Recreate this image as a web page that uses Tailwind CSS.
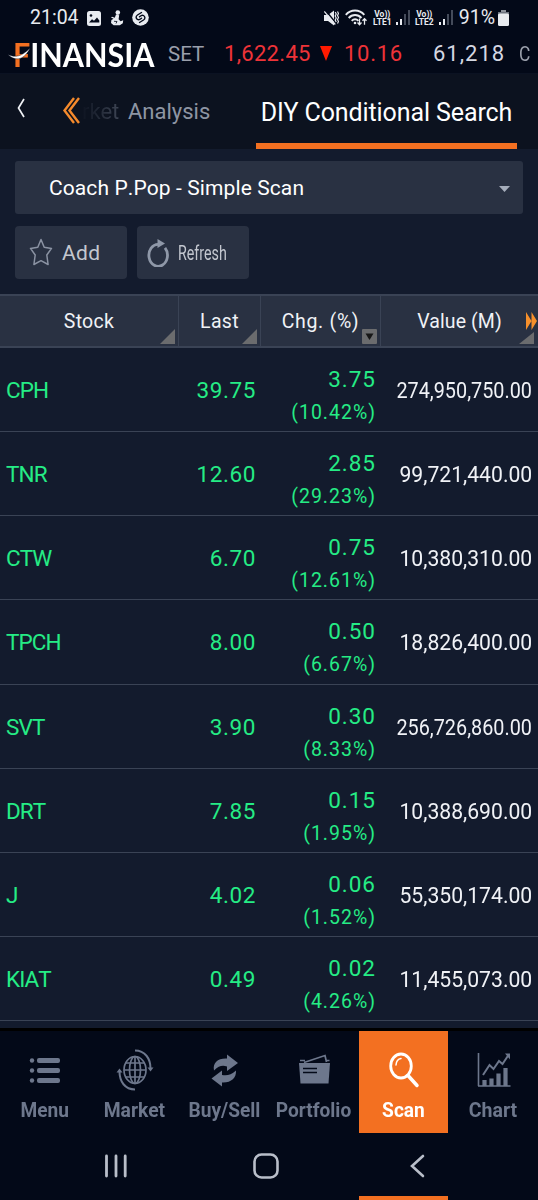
<!DOCTYPE html>
<html lang="en">
<head>
  <meta charset="UTF-8">
  <meta name="viewport" content="width=device-width, initial-scale=1.0">
  <title>Finansia - DIY Conditional Search</title>
  <script src="https://cdn.jsdelivr.net/npm/@tailwindcss/browser@4"></script>
</head>
<body class="bg-[#030918] overflow-hidden">
<div class="w-[538px] h-[1200px] flex flex-col overflow-hidden bg-[#030918] font-[Roboto,sans-serif] text-[#f0f2f6] whitespace-nowrap">

  <!-- Status bar -->
  <div class="h-[35px] shrink-0 flex items-center pl-[30px] pr-[29px] text-[19.5px] leading-none text-[#e8ebf0]">
    <span class="w-[57px]">21:04</span>
    <svg class="w-[14px] h-[15px] mt-px" viewBox="0 0 14 15">
      <rect width="14" height="15" rx="2.5" fill="#e8ebf0"/>
      <path d="M2 11.5l3-3.2 2 1.4 3-3.2 2.3 3v2z" fill="#030918"/>
      <circle cx="4" cy="4.5" r="1.3" fill="#030918"/>
    </svg>
    <svg class="w-[14px] h-[16px] ml-[9px]" viewBox="0 0 14 16" fill="#e8ebf0">
      <circle cx="7.8" cy="2.6" r="2.3"/>
      <path d="M6 4.5l3.2.7-.6 4 2 2 2.6-1-.4 3-3 2H3.6L1 13l.4-3 2.2-1.2L1 7.5 2 6.8l2.8 1z"/>
      <path d="M4 11.3l3 .2-1 2" fill="none" stroke="#030918" stroke-width=".8"/>
    </svg>
    <svg class="w-[17px] h-[17px] ml-[8px]" viewBox="0 0 17 17">
      <circle cx="8.5" cy="8.5" r="8.3" fill="#e8ebf0"/>
      <path d="M9.500 3.500L5.500 6c-2.200 1.500-1.500 3.500 0 4.500 1.500.8 2.500 0 4-1.200M7.500 13.500l4-2.500c2.200-1.500 1.500-3.500 0-4.500-1.500-.8-2.500 0-4 1.200" fill="none" stroke="#030918" stroke-width="1.400" stroke-linecap="round"/>
    </svg>
    <div class="flex-1"></div>
    <svg class="w-[15px] h-[16px]" viewBox="0 0 15 16">
      <path d="M0 5h4l6-4.500v15L4 11H0z" fill="#e8ebf0"/>
      <path d="M1.500.3l11 13.500" stroke="#030918" stroke-width="1.500"/>
      <path d="M.3 1.500l11 13M11.200 2l1 2-1 2 1 2-1 2 1 2M13.500 1.500l1 2-1 2 1 2-1 2 1 2-1 2" stroke="#e8ebf0" stroke-width="1.200" fill="none"/>
    </svg>
    <svg class="w-[23px] h-[17px] ml-[6px]" viewBox="0 0 23 17" fill="none" stroke="#e8ebf0" stroke-width="1.900">
      <path d="M.8 5.800c5-5.700 13.500-5.700 18.500 0M3.700 9c3.500-4 9.200-4 12.700 0M6.700 11.800c2-2 4.800-2 6.700 0"/>
      <circle cx="10" cy="14" r="1.300" fill="#e8ebf0" stroke="none"/>
      <path d="M14.500 9.500v6M12.500 13.500l2 2.200 2-2.200M19.500 15.800v-6M17.500 11.800l2-2.200 2 2.200" stroke-width="1.300"/>
    </svg>
    <div class="flex flex-col items-center w-[21px] ml-[4px] text-[8.500px] leading-[8px] font-bold"><span>Vo))</span><span>LTE1</span></div>
    <svg class="w-[14px] h-[15px] ml-[3px]" viewBox="0 0 14 15">
      <path d="M1 12v3M5 9v6" stroke="#e8ebf0" stroke-width="2"/>
      <path d="M9 4v11M13 0v15" stroke="#5b6170" stroke-width="1.500"/>
    </svg>
    <div class="flex flex-col items-center w-[21px] ml-[4px] text-[8.500px] leading-[8px] font-bold"><span>Vo))</span><span>LTE2</span></div>
    <svg class="w-[14px] h-[15px] ml-[4px]" viewBox="0 0 14 15">
      <path d="M1 12v3M5 9v6" stroke="#e8ebf0" stroke-width="2"/>
      <path d="M9 4v11M13 0v15" stroke="#5b6170" stroke-width="1.500"/>
    </svg>
    <span class="ml-[6px]">91%</span>
    <svg class="w-[11px] h-[16px] ml-[3px]" viewBox="0 0 11 16">
      <path d="M3 0h5v2H3z" fill="#8d929c"/><path d="M0 2h11v4H0z" fill="#6c727e"/>
      <rect y="3.500" width="11" height="12.500" rx="1.500" fill="#e8ebf0"/>
    </svg>
  </div>

  <!-- Logo and index ticker -->
  <div class="h-[39px] shrink-0 flex items-center border-b border-[#0b1222] text-[22px] leading-none">
    <div class="relative w-[168px] pl-[13px] font-[Lato,sans-serif] font-bold text-[33px] leading-[37px] text-white">
      <div class="origin-left scale-x-[.925]"><span class="text-[#f37021]">F</span>INANSIA</div>
      <svg class="absolute left-[8px] top-[12px] w-[22px] h-[13px]" viewBox="0 0 22 13">
        <path d="M0 6.500c7 3.500 14 2 22-6.500-5 11-14 14.500-22 6.500z" fill="#fff" stroke="#030918" stroke-width=".4"/>
      </svg>
    </div>
    <span class="w-[56px] text-[20.500px] text-[#9a9fab]">SET</span>
    <span class="w-[96px] tracking-[.3px] text-[#ee3338]">1,622.45</span>
    <svg class="w-[12px] h-[15px] mb-[2px]" viewBox="0 0 12 15"><path d="M0 0h12L6 15z" fill="#ff1a00"/></svg>
    <span class="ml-[12px] w-[89px] tracking-[.7px] text-[#ee3338]">10.16</span>
    <span class="w-[86px] tracking-[1px] text-[#d5d8e2]">61,218</span>
    <span class="text-[20.500px] scale-x-[.85] origin-left text-[#9a9fab]">C</span>
  </div>

  <!-- Tabs -->
  <div class="h-[75px] shrink-0 flex bg-[#0c121f]">
    <svg class="w-[8px] h-[20px] ml-[17px] mt-[24px]" viewBox="0 0 8 20" fill="none" stroke="#f0f2f6" stroke-width="1.700"><path d="M7 1L1.500 10 7 19"/></svg>
    <svg class="w-[18px] h-[27px] ml-[37px] mt-[23px]" viewBox="0 0 18 27" fill="none" stroke="#f58a2c" stroke-width="2.400"><path d="M12 1L2.500 13.500 12 26M17 1L7.500 13.500 17 26"/></svg>
    <div class="w-[176px] pt-[24px] text-[22px] leading-[28px] text-[#8e95a3]">
      <span class="inline-block w-[48px] pl-[2px] bg-linear-to-r from-[#0c121f] to-[#4a5160] bg-clip-text text-transparent">rket</span><span>Analysis</span>
    </div>
    <div class="w-[261px] pt-[24px] border-b-[6px] border-[#f37021] text-center text-[25px] leading-[29px] tracking-[-.1px] text-white">DIY Conditional Search</div>
  </div>

  <!-- Filters -->
  <div class="h-[145px] shrink-0 bg-[#131b2d] pt-[12px] pl-[15px]">
    <div class="w-[508px] h-[53px] rounded-[3px] bg-[#293142] flex items-center justify-between pt-[2px] pl-[34px] pr-[13px] text-[21px] tracking-[.1px] [font-kerning:none] text-white">
      <span>Coach P.Pop - Simple Scan</span>
      <svg class="w-[11px] h-[6px]" viewBox="0 0 11 6"><path d="M0 0h11L5.500 6z" fill="#a5adbb"/></svg>
    </div>
    <div class="flex gap-[10px] mt-[12px] text-[21px] text-[#c3c7cf]">
      <div class="w-[112px] h-[53px] rounded bg-[#293142] flex items-center pt-[2px] pl-[14px]">
        <svg class="w-[24px] h-[28px] mb-[4px]" viewBox="0 0 24 28" fill="none" stroke="#8b93a3" stroke-width="1.500" stroke-linejoin="round"><path d="M12 1.500l3.200 7.700 7.300 1.200-4.700 6.600 1.300 9.500-7.100-3.800-7.100 3.800 1.300-9.500-4.700-6.600 7.300-1.200z"/></svg>
        <span class="ml-[9px] tracking-[.3px]">Add</span>
      </div>
      <div class="w-[112px] h-[53px] rounded bg-[#293142] flex items-center pt-[2px] pl-[10px]">
        <svg class="w-[22px] h-[28px] mb-[2px]" viewBox="0 0 22 28"><path d="M11.500 5.300A9.300 11 0 1 0 18 8.800" fill="none" stroke="#8f98a8" stroke-width="2.800"/><path d="M10.500 0l7.500 4.500-7.500 4.500z" fill="#8f98a8"/></svg>
        <span class="ml-[9px] w-[50px]"><span class="inline-block origin-left scale-x-[.68]">Refresh</span></span>
      </div>
    </div>
  </div>

  <!-- Table head -->
  <div class="h-[54px] shrink-0 grid grid-cols-[179px_82px_120px_157px] bg-[#293142] border-y-2 border-[#3a4355] text-[19.500px] leading-[51px] tracking-[.3px] text-center">
    <div class="relative border-r border-[#3a4355]">Stock
      <svg class="absolute right-[3px] bottom-[3px] w-[15px] h-[15px]" viewBox="0 0 15 15"><path d="M15 0v15H0z" fill="#6b6c6e"/></svg>
    </div>
    <div class="relative border-r border-[#3a4355]">Last
      <svg class="absolute right-[3px] bottom-[3px] w-[15px] h-[15px]" viewBox="0 0 15 15"><path d="M15 0v15H0z" fill="#6b6c6e"/></svg>
    </div>
    <div class="relative border-r border-[#3a4355] tracking-[.7px]">Chg. (%)
      <svg class="absolute right-[3px] bottom-[3px] w-[15px] h-[15px]" viewBox="0 0 15 15"><rect width="15" height="15" rx="1" fill="#6b6c6e"/><path d="M3.500 4.500h8l-4 6.500z" fill="#171717"/></svg>
    </div>
    <div class="relative tracking-[.1px]">Value (M)
      <svg class="absolute right-[4px] bottom-[3px] w-[15px] h-[12px]" viewBox="0 0 15 12"><path d="M15 0v12H0z" fill="#6b6c6e"/></svg>
      <svg class="absolute right-[1px] top-[16px] w-[11px] h-[18px]" viewBox="0 0 11 18"><path d="M0 0l5.500 9L0 18zM5.500 0L11 9l-5.500 9z" fill="#f7902b"/></svg>
    </div>
  </div>

  <!-- Table body -->
  <div id="rows" class="h-[680px] shrink-0 bg-[#131b2d] overflow-hidden"></div>

  <!-- Bottom menu -->
  <div class="h-[105px] shrink-0 flex border-t-[3px] border-black text-[21px] leading-[24px] font-bold text-[#6d778c]">
    <div class="flex-1 pt-[18px] flex flex-col items-center">
      <svg class="w-[44px] h-[44px]" viewBox="0 0 44 44" fill="currentColor"><circle cx="9" cy="11.500" r="2.200"/><circle cx="9" cy="21.500" r="2.200"/><circle cx="9" cy="31.500" r="2.200"/><rect x="14" y="9" width="23" height="5" rx="2"/><rect x="14" y="19" width="23" height="5" rx="2"/><rect x="14" y="29" width="23" height="5" rx="2"/></svg>
      <span class="mt-[5px] scale-x-[.91]">Menu</span>
    </div>
    <div class="flex-1 pt-[18px] flex flex-col items-center">
      <svg class="w-[44px] h-[44px]" viewBox="0 0 44 44" fill="none" stroke="currentColor" stroke-width="1.700">
        <ellipse cx="22" cy="21" rx="11" ry="13.500"/><ellipse cx="22" cy="21" rx="5.500" ry="13.500"/>
        <path d="M22 7.500v27M11 21h22M13 14h18M13 28h18"/>
        <path d="M22 1.500c10 0 15.500 8 15.500 18M22 40.500c-10 0-15.500-8-15.500-18" stroke-width="2"/>
        <path d="M34.500 18.500h6l-3 4zM3.500 23.500h6l-3-4z" fill="currentColor" stroke="none"/>
      </svg>
      <span class="mt-[5px] scale-x-[.92]">Market</span>
    </div>
    <div class="flex-1 pt-[18px] flex flex-col items-center">
      <svg class="w-[44px] h-[44px]" viewBox="0 0 44 44" fill="currentColor">
        <path d="M25 5.500l11 8.500-11 8v-4.500c-5-1.500-8-.5-13 4C10.500 13.500 16 9 25 9.500z"/>
        <path d="M20 37.500L9.500 29.500 20 21.500V26c5 1 9 0 14-4.500.5 7.500-5 12.500-14 12z"/>
      </svg>
      <span class="mt-[5px] scale-x-[.91]">Buy/Sell</span>
    </div>
    <div class="flex-1 pt-[18px] flex flex-col items-center">
      <svg class="w-[44px] h-[44px]" viewBox="0 0 44 44">
        <path d="M7 14h31l-1.500 20.500h-28z" fill="currentColor"/>
        <path d="M12 13.500l21-7 1.500 6.500M8 11.500h5M34.500 11.500h3" fill="none" stroke="currentColor" stroke-width="1.700"/>
        <path d="M11 19.500h14M11 23.500h14" stroke="#030918" stroke-width="1.600"/>
      </svg>
      <span class="mt-[5px] scale-x-[.91]">Portfolio</span>
    </div>
    <div class="flex-1 pt-[18px] flex flex-col items-center bg-[#f37021] text-white">
      <svg class="w-[44px] h-[44px]" viewBox="0 0 44 44" fill="none" stroke="currentColor" stroke-linecap="round">
        <ellipse cx="19" cy="17" rx="10.300" ry="12" stroke-width="2.800"/>
        <path d="M14 16c.3-4 2-6 5-6.500" stroke-width="1.500"/>
        <path d="M26 26.500l9 10" stroke-width="3.500"/>
      </svg>
      <span class="mt-[5px] scale-x-[.91]">Scan</span>
    </div>
    <div class="flex-1 pt-[18px] flex flex-col items-center">
      <svg class="w-[44px] h-[44px]" viewBox="0 0 44 44" fill="none" stroke="currentColor">
        <path d="M7.500 4v33M7 37h32.500" stroke-width="1.600"/>
        <path d="M12 26l6.500-10 4 4 5.500-8 3.500 3 6-9" stroke-width="2"/>
        <path d="M34 4.500h5v6z" fill="currentColor" stroke="none"/>
        <path d="M13.500 37v-6M20.500 37v-7.500M27.500 37V24.500M34.500 37V19" stroke-width="4.200"/>
      </svg>
      <span class="mt-[5px] scale-x-[.93]">Chart</span>
    </div>
  </div>

  <!-- System navigation -->
  <div class="h-[63px] shrink-0 flex items-center pl-[104px] pt-[2px]">
    <svg class="w-[24px] h-[24px]" viewBox="0 0 24 24" stroke="#b9bec9" stroke-width="2.800" stroke-linecap="round"><path d="M2.500 2v20M12 2v20M21.200 2v20"/></svg>
    <svg class="w-[26px] h-[26px] ml-[125px]" viewBox="0 0 26 26" fill="none" stroke="#b9bec9" stroke-width="2.600"><rect x="1.500" y="1.500" width="23" height="23" rx="7"/></svg>
    <svg class="w-[16px] h-[24px] ml-[130px]" viewBox="0 0 16 24" fill="none" stroke="#b9bec9" stroke-width="2.600" stroke-linecap="round"><path d="M14 2L3 12l11 10"/></svg>
  </div>
  <div class="h-[4px] shrink-0 w-[89px] ml-[359px] bg-[#f37021]"></div>
</div>

<script>
  // scan result
  const stocks = [
    ["CPH", "39.75", "3.75", "10.42", "274,950,750.00"],
    ["TNR", "12.60", "2.85", "29.23", "99,721,440.00"],
    ["CTW", "6.70", "0.75", "12.61", "10,380,310.00"],
    ["TPCH", "8.00", "0.50", "6.67", "18,826,400.00"],
    ["SVT", "3.90", "0.30", "8.33", "256,726,860.00"],
    ["DRT", "7.85", "0.15", "1.95", "10,388,690.00"],
    ["J", "4.02", "0.06", "1.52", "55,350,174.00"],
    ["KIAT", "0.49", "0.02", "4.26", "11,455,073.00"],
  ];

  // long values are squeezed to stay inside the column
  document.getElementById("rows").innerHTML = stocks.map(([name, last, chg, pct, value]) => `
    <div class="h-[84.150px] grid grid-cols-[179px_82px_120px_157px] border-b border-[#3a4355] text-[22.500px] leading-[85px] text-[#25ec85]">
      <div class="pl-[6px] tracking-[-.9px] [font-kerning:none]">${name}</div>
      <div class="pr-[5px] text-right tracking-[.6px]">${last}</div>
      <div class="pr-[5px] pt-[16px] text-right tracking-[1px]">
        <div class="leading-[31px]">${chg}</div>
        <div class="pt-px leading-[33px] text-[19.500px]">(${pct}%)</div>
      </div>
      <div class="pr-[6px] flex justify-end text-[#f0f2f6]"><span class="origin-right ${value.length > 13 ? "scale-x-[.88]" : "scale-x-[.94]"}">${value}</span></div>
    </div>`).join("");
</script>
</body>
</html>
